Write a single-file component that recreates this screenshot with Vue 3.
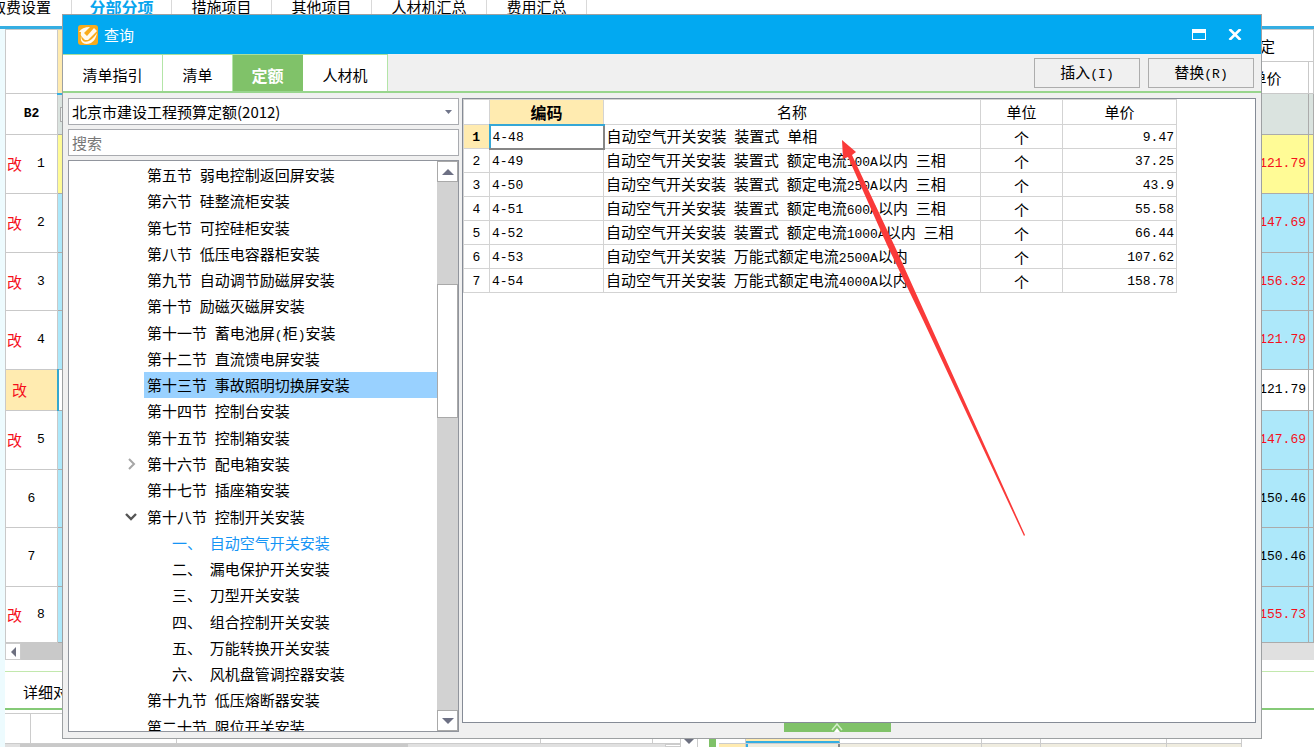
<script setup>
import { ref, h } from 'vue'

// Half-width runs are set in a monospace face, the rest in the CJK face.
const Mixed = (props) =>
  h('span', { class: 'mixed' }, props.text.split(/([\x20-\x7e]+)/).filter(Boolean).map((part) =>
    /^[\x20-\x7e]/.test(part) ? h('span', { class: 'lat' }, part) : part))
Mixed.props = ['text']

const mainTabs = ['取费设置', '分部分项', '措施项目', '其他项目', '人材机汇总', '费用汇总']

const sheet = [
  { changed: true, no: '1', price: '121.79', tone: 'yellow' },
  { changed: true, no: '2', price: '147.69', tone: 'blue' },
  { changed: true, no: '3', price: '156.32', tone: 'blue short' },
  { changed: true, no: '4', price: '121.79', tone: 'blue' },
  { changed: true, no: '', price: '121.79', tone: 'current', plain: true },
  { changed: true, no: '5', price: '147.69', tone: 'blue' },
  { changed: false, no: '6', price: '150.46', tone: 'blue short', plain: true },
  { changed: false, no: '7', price: '150.46', tone: 'blue', plain: true },
  { changed: true, no: '8', price: '155.73', tone: 'blue last' },
]

const queryTabs = ['清单指引', '清单', '定额', '人材机']
const activeTab = ref('定额')
const keyword = ref('')

const tree = [
  { t: '第五节 弱电控制返回屏安装' },
  { t: '第六节 硅整流柜安装' },
  { t: '第七节 可控硅柜安装' },
  { t: '第八节 低压电容器柜安装' },
  { t: '第九节 自动调节励磁屏安装' },
  { t: '第十节 励磁灭磁屏安装' },
  { t: '第十一节 蓄电池屏(柜)安装' },
  { t: '第十二节 直流馈电屏安装' },
  { t: '第十三节 事故照明切换屏安装', cls: 'selected' },
  { t: '第十四节 控制台安装' },
  { t: '第十五节 控制箱安装' },
  { t: '第十六节 配电箱安装', toggle: 'closed' },
  { t: '第十七节 插座箱安装' },
  { t: '第十八节 控制开关安装', toggle: 'open' },
  { t: '一、 自动空气开关安装', cls: 'child active' },
  { t: '二、 漏电保护开关安装', cls: 'child' },
  { t: '三、 刀型开关安装', cls: 'child' },
  { t: '四、 组合控制开关安装', cls: 'child' },
  { t: '五、 万能转换开关安装', cls: 'child' },
  { t: '六、 风机盘管调控器安装', cls: 'child' },
  { t: '第十九节 低压熔断器安装' },
  { t: '第二十节 限位开关安装' },
]

const rows = [
  ['4-48', '自动空气开关安装 装置式 单相', '9.47'],
  ['4-49', '自动空气开关安装 装置式 额定电流100A以内 三相', '37.25'],
  ['4-50', '自动空气开关安装 装置式 额定电流250A以内 三相', '43.9'],
  ['4-51', '自动空气开关安装 装置式 额定电流600A以内 三相', '55.58'],
  ['4-52', '自动空气开关安装 装置式 额定电流1000A以内 三相', '66.44'],
  ['4-53', '自动空气开关安装 万能式额定电流2500A以内', '107.62'],
  ['4-54', '自动空气开关安装 万能式额定电流4000A以内', '158.78'],
]
</script>

<template>
  <div class="desktop">
    <div class="app">
      <nav class="main-tabs">
        <a v-for="(t, i) in mainTabs" :key="t" href="#" :class="['main-tab', { first: i === 0, on: i === 1, wide: i === 4 }]">{{ t }}</a>
      </nav>

      <div class="workspace">
        <table class="sheet">
          <colgroup><col class="c-no"><col><col class="c-price"><col class="c-tail"></colgroup>
          <thead>
            <tr class="h1"><th rowspan="2"></th><th rowspan="2" class="cream"></th><th colspan="2" class="group">定</th></tr>
            <tr class="h2"><th>单价</th><th></th></tr>
          </thead>
          <tbody>
            <tr class="b2"><th class="lat">B2</th><td><span class="box"></span></td><td></td><td></td></tr>
            <tr v-for="(r, i) in sheet" :key="i" :class="r.tone">
              <th>
                <div :class="['mark', { pair: r.changed && r.no }, { solo: !r.no }]">
                  <span v-if="r.changed" class="red">改</span><span v-if="r.no" class="lat">{{ r.no }}</span>
                </div>
              </th>
              <td></td>
              <td :class="['price', 'lat', { red: !r.plain }]">{{ r.price }}</td>
              <td></td>
            </tr>
          </tbody>
        </table>
        <div class="hbar">
          <button class="hbtn" aria-label="向左滚动"><svg width="7" height="10" viewBox="0 0 7 10"><path d="M6 0v10L1 5z" fill="#6d7080" /></svg></button>
          <div class="hthumb"></div><div class="hrest"></div>
        </div>
        <div class="detail-tabs"><a href="#">详细对比</a></div>
        <div class="bottom">
          <div class="bottom-left">
            <div class="cells"><i></i><i></i><i></i><i></i><i></i></div>
            <div class="bscroll"><b></b><s></s></div>
          </div>
          <div class="bottom-arrow"><svg width="10" height="5" viewBox="0 0 10 5"><path d="M0 0h10L5 5z" fill="#6d7080" /></svg></div>
          <div class="splitter"></div>
          <div class="bottom-grid">
            <div class="bg-head"><i></i><i class="hot"></i><i></i><i></i><i></i><i></i></div>
            <div class="bg-row"><i class="num"></i><i class="cur"></i><i></i><i></i><i></i><i></i></div>
          </div>
        </div>
      </div>
    </div>

    <section class="dialog" aria-label="查询">
      <header class="title">
        <svg class="logo" width="20" height="20" viewBox="0 0 20 20">
          <rect width="20" height="20" rx="3" fill="#f9ab1c" />
          <path d="M1 7Q4 2 12 2L8 6 6 8l3 3 7-8 3 3-9 9H7l-3-3q-2-2-1-5z" fill="#fffaf0" />
          <path d="M3 11q1 8 8 5 4-2 8-8-1 7-6 10-5 2-8 0-3-2-2-7z" fill="#fffaf0" />
        </svg>
        <h1>查询</h1>
        <button class="wbtn" aria-label="最大化"><svg width="14" height="11" viewBox="0 0 14 11"><path d="M0 0h14v11H0zM1 4v6h12V4z" fill="#fff" fill-rule="evenodd" /></svg></button>
        <button class="wbtn" aria-label="关闭"><svg width="14" height="11" viewBox="0 0 14 11"><path d="M1.500 0L12.500 11M12.500 0L1.500 11" stroke="#fff" stroke-width="2.600" /></svg></button>
      </header>

      <div class="toolbar">
        <div class="tabs">
          <button v-for="t in queryTabs" :key="t" :class="['tab', { on: t === activeTab }]" @click="activeTab = t">{{ t }}</button>
        </div>
        <div class="actions">
          <button class="action"><Mixed text="插入(I)" /></button>
          <button class="action"><Mixed text="替换(R)" /></button>
        </div>
      </div>

      <div class="content">
        <div class="side">
          <div class="combo">
            <select aria-label="定额库"><option>北京市建设工程预算定额(2012)</option></select>
            <svg width="7" height="4" viewBox="0 0 7 4"><path d="M0 0h7L3.500 4z" fill="#70758a" /></svg>
          </div>
          <input v-model="keyword" class="search" type="text" placeholder="搜索" aria-label="搜索">
          <div class="tree">
            <ul>
              <li v-for="n in tree" :key="n.t" :class="n.cls">
                <span class="toggle">
                  <button v-if="n.toggle" :aria-label="n.toggle === 'open' ? '折叠' : '展开'">
                    <svg v-if="n.toggle === 'closed'" width="12" height="12" viewBox="0 0 12 12"><path d="M4 1l5 5-5 5" fill="none" stroke="#a6a6a6" stroke-width="2" /></svg>
                    <svg v-else width="12" height="12" viewBox="0 0 12 12"><path d="M1 3l5 5 5-5" fill="none" stroke="#555" stroke-width="2.400" /></svg>
                  </button>
                </span>
                <span class="label"><Mixed :text="n.t" /></span>
              </li>
            </ul>
            <div class="vbar">
              <button aria-label="向上滚动"><svg width="12" height="6" viewBox="0 0 12 6"><path d="M0 6h12L6 0z" fill="#6d7084" /></svg></button>
              <div class="before"></div><div class="thumb"></div><div class="after"></div>
              <button aria-label="向下滚动"><svg width="12" height="6" viewBox="0 0 12 6"><path d="M0 0h12L6 6z" fill="#6d7084" /></svg></button>
            </div>
          </div>
        </div>

        <div class="main">
          <div class="panel">
            <table class="grid">
              <colgroup><col class="g-no"><col class="g-code"><col class="g-name"><col class="g-unit"><col class="g-price"></colgroup>
              <thead><tr><th></th><th class="hot">编码</th><th>名称</th><th>单位</th><th>单价</th></tr></thead>
              <tbody>
                <tr v-for="(r, i) in rows" :key="r[0]" :class="{ current: i === 0 }">
                  <th class="lat">{{ i + 1 }}</th>
                  <td class="code lat">{{ r[0] }}</td>
                  <td class="name"><Mixed :text="r[1]" /></td>
                  <td class="unit">个</td>
                  <td class="num lat">{{ r[2] }}</td>
                </tr>
              </tbody>
            </table>
          </div>
          <div class="handle-row">
            <button class="handle" aria-label="展开"><svg width="12" height="9" viewBox="0 0 12 9"><path d="M1 7l5-6 5 6" fill="none" stroke="#d3efca" stroke-width="1.500" /><path d="M3 9l3-4 3 4z" fill="#fff" /></svg></button>
          </div>
        </div>
      </div>
    </section>

    <svg class="pointer" width="185" height="397" viewBox="0 0 185 397"><path d="M1 0l14 12-4 3 44 94 32 71 97 215-1 1L82 180 46 105 7 17l-5 2z" fill="#fa3a39" /></svg>
  </div>
</template>

<style>
body { overflow: hidden; }
.lat { font-family: "Liberation Mono", monospace; font-size: 13px; white-space: pre; }
.mixed { white-space: pre; }
</style>

<style scoped>
.desktop, .desktop * { box-sizing: border-box; }
.desktop { position: relative; height: 100vh; overflow: hidden; background: #fff; color: #000; font-family: "Noto Sans CJK SC", sans-serif; font-size: 15px; line-height: 18px; }
button, input, select { font: inherit; color: inherit; margin: 0; padding: 0; border: 0; background: none; }
svg { display: block; }
a { color: inherit; text-decoration: none; }
.red { color: #f5101c; }

.app { height: 100%; display: flex; flex-direction: column; }
.main-tabs { display: flex; flex: none; height: 29px; border-bottom: 3px solid #35aee2; }
.main-tab { width: 100px; height: 26px; line-height: 14px; text-align: center; border-right: 1px solid #d9d9d9; }
.main-tab.first { width: 72px; padding-right: 20px; display: flex; justify-content: flex-end; white-space: nowrap; }
.main-tab.wide { width: 115px; }
.main-tab.on { font-size: 16px; font-weight: 700; color: #08a5ee; }
.workspace { flex: 1; min-height: 0; display: flex; flex-direction: column; border-left: 5px solid #edfbfe; }

.sheet { width: 100%; flex: none; table-layout: fixed; border-collapse: collapse; }
.c-no { width: 52px; } .c-price { width: 84px; } .c-tail { width: 5px; }
.sheet th, .sheet td { padding: 0; border: 1px solid #c9c9c9; font-weight: 400; }
.sheet td { border-color: #ababab; }
.sheet tr { height: 59px; }
.sheet tr.short { height: 58px; }
.sheet tr.h1 { height: 32px; } .sheet tr.h2 { height: 32px; }
.sheet .cream { background: #ffebb0; border-bottom: 2px solid #35aee2; }
.sheet .group { text-align: right; padding-right: 38px; }
.sheet tr.b2 { height: 41px; } .b2 td { background: #dae3df; } .sheet .b2 th { font-weight: 700; }
.box { display: block; width: 14px; height: 15px; margin-left: 2px; border: 1px solid #aaa; background: #eef2f0; }
.yellow td { background: #fffb96; } .blue td { background: #ade8fa; }
.sheet tr.current { height: 41px; } .sheet .current th { background: #ffebb0; border-right: 2px solid #35a7ce; }
.sheet tr.last { height: 56px; }
.sheet .price { text-align: right; padding-right: 2px; }
.mark { display: flex; justify-content: center; align-items: center; }
.mark.pair { justify-content: flex-start; gap: 15px; padding-left: 1px; }
.mark.solo { justify-content: flex-start; padding-left: 6px; }
.hbar { display: flex; flex: none; height: 17px; }
.hbtn { width: 16px; display: grid; place-items: center; border: 1px solid #ccc; }
.hthumb { width: 300px; background: #c9c9c9; } .hrest { flex: 1; background: #e0e0e0; }
.detail-tabs { flex: none; margin-top: 11px; height: 39px; border-top: 1px solid #c2e8ad; border-bottom: 2px solid #85ca77; padding: 11px 0 0 18px; }
.bottom { flex: 1; min-height: 0; display: flex; padding-top: 3px; }
.bottom-left { width: 676px; display: flex; flex-direction: column; }
.cells { display: flex; height: 31px; border-top: 1px solid #ccc; border-bottom: 1px solid #ccc; }
.cells i { border-right: 1px solid #ccc; } .cells i:nth-child(1) { width: 26px; } .cells i:nth-child(2) { width: 146px; } .cells i:nth-child(3) { width: 364px; } .cells i:nth-child(4) { width: 112px; }
.cells i:nth-child(5) { flex: 1; }
.bscroll { display: flex; flex: 1; background: #e0e0e0; padding-left: 15px; } .bscroll b { width: 388px; background: #c9c9c9; } .bscroll s { width: 16px; margin-left: auto; background: #fff; border: 1px solid #ccc; }
.bottom-arrow { width: 17px; padding: 26px 0 0 3px; border-right: 1px solid #ccc; }
.splitter { width: 7px; margin: 0 3px 0 11px; background: #7fc168; }
.bottom-grid { width: 523px; }
.bg-head, .bg-row { display: flex; }
.bg-head { height: 31px; border-bottom: 1px solid #ccc; } .bg-row { height: 20px; background: #efecdf; }
.bg-head i, .bg-row i { width: 59px; border-right: 1px solid #ccc; }
.bottom-grid i:nth-child(1) { width: 27px; } .bottom-grid i:nth-child(2) { width: 94px; } .bottom-grid i:nth-child(3) { width: 142px; } .bottom-grid i:nth-child(5) { width: 126px; } .bottom-grid i:nth-child(6) { width: 75px; }
.bottom-grid .hot { background: #ffebb0; border-bottom: 2px solid #35aee2; } .bg-row .num { background: #ffebb0; } .bg-row .cur { border-left: 2px solid #35aee2; border-right: 2px solid #888; }

.dialog { position: absolute; top: 14px; right: 52px; bottom: 8px; left: 62px; display: flex; flex-direction: column; border: 1px solid #9da0a2; background: #f0f0f0; }
.title { display: flex; align-items: center; flex: none; height: 39px; padding: 0 8px 0 15px; background: #02a9f1; color: #fff; }
.title h1 { flex: 1; margin: 0 0 0 6px; font-size: 15px; font-weight: 400; line-height: 18px; }
.wbtn { width: 36px; height: 30px; display: grid; place-items: center; }
.toolbar { display: flex; flex: none; justify-content: space-between; height: 39px; border-bottom: 2px solid #98d58d; }
.tabs { display: flex; border-top: 1px solid #a9df9c; }
.tab { width: 70px; padding: 3px 0 0; border-right: 1px solid #b3e5a7; background: #fff; }
.tab:first-child { width: 100px; }
.tab.on { font-weight: 700; font-size: 16px; color: #fff; background: #80c269; border-color: #80c269; }
.tab:last-child { width: 85px; }
.actions { display: flex; gap: 8px; padding: 4px 7px 3px 0; }
.action { width: 106px; border: 1px solid #adadad; }
.content { flex: 1; min-height: 0; display: flex; gap: 3px; padding: 5px 5px 6px; }
.side { width: 391px; display: flex; flex-direction: column; gap: 4px; }
.combo { position: relative; height: 27px; }
.combo select, .search { width: 100%; height: 27px; padding: 0 3px; border: 1px solid #a9abb0; border-radius: 0; background: #fff; appearance: none; outline: 0; }
.combo svg { position: absolute; right: 7px; top: 12px; pointer-events: none; }
.search::placeholder { color: #777; opacity: 1; }
.tree { flex: 1; min-height: 0; display: flex; overflow: hidden; border: 1px solid #91959d; background: #fff; }
.tree ul { flex: 1; display: grid; grid-auto-rows: 1fr; margin: 1px 0 -9px; padding: 0; list-style: none; }
.tree li { display: flex; min-height: 0; }
.toggle { width: 75px; display: flex; align-items: center; justify-content: flex-end; padding-right: 7px; }
.label { flex: 1; padding: 4px 0 0 3px; }
.child .label { padding-left: 28px; }
.selected .label { background: #99d1ff; }
.active { color: #1594f5; }
.vbar { width: 21px; display: flex; flex-direction: column; background: #d2d2d2; }
.vbar button { flex: none; height: 21px; display: grid; place-items: center; border: 1px solid #a9a9a9; background: #fff; }
.before { flex: 102; } .thumb { flex: 133; border: 1px solid #a9a9a9; background: #fff; } .after { flex: 293; }
.main { flex: 1; min-width: 0; display: flex; flex-direction: column; }
.panel { flex: 1; min-height: 0; border: 1px solid #858b96; background: #fff; }
.grid { width: 713px; height: 193px; table-layout: fixed; border-collapse: collapse; }
.g-no { width: 26px; } .g-code { width: 114px; } .g-name { width: 377px; } .g-unit { width: 82px; } .g-price { width: 114px; }
.grid th, .grid td { padding: 0 2px; border: 1px solid #d3d3d3; font-weight: 400; white-space: nowrap; line-height: 18px; }
.grid tbody th, .grid tbody td { padding-top: 2px; }
.grid thead tr { height: 25px; }
.grid .hot { background: #ffebb0; font-size: 16px; font-weight: 700; border-bottom: 2px solid #35a7d6; }
.grid .current th { background: #ffebb0; font-weight: 700; }
.grid .current .code { border-left: 2px solid #35a7d6; border-right: 2px solid #868686; border-bottom: 2px solid #868686; }
.grid .code, .grid .name { text-align: left; } .grid .unit { text-align: center; } .grid .num { text-align: right; }
.handle-row { display: flex; justify-content: center; padding-right: 44px; }
.handle { width: 107px; height: 9px; display: grid; place-items: center; background: #80c269; }
.pointer { position: absolute; left: 841px; top: 140px; pointer-events: none; }
</style>
